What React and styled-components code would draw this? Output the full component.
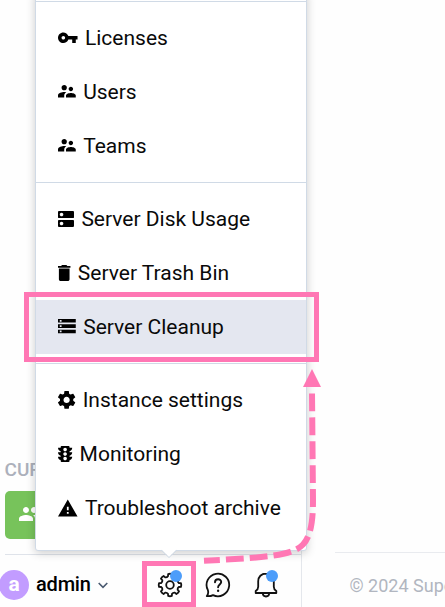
import React from 'react';
import styled, { createGlobalStyle } from 'styled-components';

const PINK = '#ff77b4';

const GlobalStyle = createGlobalStyle`
  * { box-sizing: border-box; }
  body { margin: 0; background: #fff; font-family: Roboto, sans-serif; overflow: hidden; }
`;

const Page = styled.div`
  position: relative;
  display: flex;
  width: 445px;
  height: 607px;
  overflow: hidden;
  background: #fefefe;
`;

const Sidebar = styled.aside`
  display: flex;
  flex: 0 0 302px;
  flex-direction: column;
  justify-content: flex-end;
  border-right: 1px solid #e4e7ec;
`;

const SectionLabel = styled.div`
  padding-left: 4.5px;
  font-size: 19px;
  font-weight: 500;
  line-height: 22px;
  color: #acb0bb;
`;

const TeamButton = styled.div`
  display: flex;
  align-items: center;
  width: 120px;
  height: 48px;
  margin: 10px 0 15px 5px;
  padding: 0 0 3px 13px;
  border-radius: 5px;
  background: #77c35b;
`;

const UserBar = styled.footer`
  display: flex;
  align-items: center;
  height: 53px;
  margin-left: 5px;
  border-top: 1px solid #dfe3ea;
  padding-top: 8px;
`;

const Avatar = styled.div`
  width: 30px;
  height: 30px;
  margin-left: -6px;
  border-radius: 50%;
  background: #c29cff;
  color: #fff;
  font-size: 21px;
  font-weight: 700;
  line-height: 28px;
  text-align: center;
`;

const UserName = styled.span`
  width: 54px;
  margin: 0 8px 0 7px;
  padding-bottom: 3px;
  font-size: 20px;
  font-weight: 500;
  letter-spacing: -0.2px;
  white-space: nowrap;
`;

const IconButton = styled.div`
  position: relative;
  width: 26px;
  height: 26px;
  margin: 0 0 1px ${(p) => p.$gap}px;
`;

const Dot = styled.span`
  position: absolute;
  top: -2px;
  right: 1px;
  width: 12px;
  height: 12px;
  border-radius: 50%;
  background: #4c9dfa;
`;

const Content = styled.main`
  display: flex;
  flex: 1;
  min-width: 0;
  flex-direction: column;
  justify-content: flex-end;
  padding-left: 33px;
`;

const Copyright = styled.div`
  height: 55px;
  padding: 22px 0 0 14.5px;
  border-top: 1px solid #e9ebef;
  color: #b1b6c0;
  font-size: 18px;
  line-height: 22px;
  white-space: nowrap;
`;

const Menu = styled.nav`
  position: absolute;
  left: 35px;
  top: -9px;
  width: 272px;
  height: 560px;
  padding-top: 9px;
  border: 1px solid #d0dae6;
  border-radius: 3px;
  background: #fff;
  box-shadow: 0 2px 10px rgba(0, 0, 0, 0.2);
`;

const Group = styled.div`
  padding: 9px 0;
  border-top: 1px solid #d0dae6;
`;

const Item = styled.div`
  display: flex;
  align-items: center;
  gap: 7.4px;
  height: 54px;
  padding-left: 22px;
  background: ${(p) => (p.$active ? '#e4e7f0' : 'transparent')};
  color: #0a0a0a;
  font-size: 21px;
  white-space: nowrap;

  svg {
    margin-bottom: 1px;
  }
`;

const Pointer = styled.svg`
  position: absolute;
  left: 160px;
  top: 549px;
`;

const Highlight = styled.div`
  position: absolute;
  left: ${(p) => p.$x}px;
  top: ${(p) => p.$y}px;
  width: ${(p) => p.$w}px;
  height: ${(p) => p.$h}px;
  border: 5px solid ${PINK};
`;

const Overlay = styled.svg`
  position: absolute;
  inset: 0;
`;

const GLYPHS = {
  key: {
    box: [1, 5.5, 22, 12],
    d: 'M12.65 10C11.83 7.67 9.61 6 7 6c-3.31 0-6 2.69-6 6s2.69 6 6 6c2.61 0 4.83-1.67 5.65-4H17v4h4v-4h2v-4H12.65zM7 14c-1.1 0-2-.9-2-2s.9-2 2-2 2 .9 2 2-.9 2-2 2z',
  },
  people: {
    box: [2, 5, 20, 14],
    d: 'M16.5 12c1.38 0 2.49-1.12 2.49-2.5S17.88 7 16.5 7 14 8.12 14 9.5s1.12 2.5 2.5 2.5zM9 11c1.66 0 2.99-1.34 2.99-3S10.66 5 9 5 6 6.34 6 8s1.34 3 3 3zm7.5 3c-1.83 0-5.5.92-5.5 2.75V19h11v-2.25c0-1.83-3.67-2.75-5.5-2.75zM9 13c-2.33 0-7 1.17-7 3.5V19h7v-2.25c0-.85.33-2.34 2.37-3.47C10.5 13.1 9.66 13 9 13z',
  },
  dns: {
    box: [3, 3, 18, 18],
    d: 'M20 13H4c-.55 0-1 .45-1 1v6c0 .55.45 1 1 1h16c.55 0 1-.45 1-1v-6c0-.55-.45-1-1-1zM7 19c-1.1 0-2-.9-2-2s.9-2 2-2 2 .9 2 2-.9 2-2 2zM20 3H4c-.55 0-1 .45-1 1v6c0 .55.45 1 1 1h16c.55 0 1-.45 1-1V4c0-.55-.45-1-1-1zM7 9c-1.1 0-2-.9-2-2s.9-2 2-2 2 .9 2 2-.9 2-2 2z',
  },
  trash: {
    box: [5, 3, 14, 18],
    d: 'M6 19c0 1.1.9 2 2 2h8c1.1 0 2-.9 2-2V7H6v12zM19 4h-3.5l-1-1h-5l-1 1H5v2h14V4z',
  },
  storage: {
    box: [2, 4, 20, 16],
    d: 'M2 20h20v-4H2v4zm2-3h2v2H4v-2zM2 4v4h20V4H2zm4 3H4V5h2v2zm-4 7h20v-4H2v4zm2-3h2v2H4v-2z',
  },
  settings: {
    box: [2.3, 2, 19.4, 20],
    d: 'M19.43 12.98c.04-.32.07-.64.07-.98s-.03-.66-.07-.98l2.11-1.65c.19-.15.24-.42.12-.64l-2-3.46c-.12-.22-.39-.3-.61-.22l-2.49 1c-.52-.4-1.08-.73-1.69-.98l-.38-2.65C14.46 2.18 14.25 2 14 2h-4c-.25 0-.46.18-.49.42l-.38 2.65c-.61.25-1.17.59-1.69.98l-2.49-1c-.23-.09-.49 0-.61.22l-2 3.46c-.13.22-.07.49.12.64l2.11 1.65c-.04.32-.07.65-.07.98s.03.66.07.98l-2.11 1.65c-.19.15-.24.42-.12.64l2 3.46c.12.22.39.3.61.22l2.49-1c.52.4 1.08.73 1.69.98l.38 2.65c.03.24.24.42.49.42h4c.25 0 .46-.18.49-.42l.38-2.65c.61-.25 1.17-.59 1.69-.98l2.49 1c.23.09.49 0 .61-.22l2-3.46c.12-.22.07-.49-.12-.64l-2.11-1.65zM12 15.5c-1.93 0-3.5-1.57-3.5-3.5s1.57-3.5 3.5-3.5 3.5 1.57 3.5 3.5-1.57 3.5-3.5 3.5z',
  },
  traffic: {
    box: [4, 3, 16, 18],
    d: 'M20 10h-3V8.86c1.72-.45 3-2 3-3.86h-3V4c0-.55-.45-1-1-1H8c-.55 0-1 .45-1 1v1H4c0 1.86 1.28 3.41 3 3.86V10H4c0 1.86 1.28 3.41 3 3.86V15H4c0 1.86 1.28 3.41 3 3.86V20c0 .55.45 1 1 1h8c.55 0 1-.45 1-1v-1.14c1.72-.45 3-2 3-3.86h-3v-1.14c1.72-.45 3-2 3-3.86zm-8 9c-1.11 0-2-.9-2-2s.89-2 2-2c1.1 0 2 .9 2 2s-.89 2-2 2zm0-5c-1.11 0-2-.9-2-2s.89-2 2-2c1.1 0 2 .9 2 2s-.89 2-2 2zm0-5c-1.11 0-2-.9-2-2 0-1.11.89-2 2-2 1.1 0 2 .89 2 2 0 1.1-.89 2-2 2z',
  },
  warning: {
    box: [1, 2.5, 22, 18],
    d: 'M1 21h22L12 2 1 21zm12-3h-2v-2h2v2zm0-4h-2v-4h2v4z',
  },
};

function Glyph({ name }) {
  const { box, d } = GLYPHS[name];
  const k = 21.33 / 24;
  return (
    <svg width={box[2] * k} height={box[3] * k} viewBox={box.join(' ')} overflow="visible" aria-hidden="true">
      <path d={d} fill="#000" />
    </svg>
  );
}

// Outline of an eight-toothed gear centred on (13, 13).
const GEAR = (() => {
  const at = (r, deg) => {
    const a = (deg * Math.PI) / 180;
    return `${(13 + r * Math.cos(a)).toFixed(2)} ${(13 + r * Math.sin(a)).toFixed(2)}`;
  };
  let d = '';
  for (let i = 0; i < 8; i += 1) {
    const c = i * 45;
    d += `${i ? 'L' : 'M'}${at(9, c - 13)}L${at(11.1, c - 9.5)}Q${at(11.6, c)} ${at(11.1, c + 9.5)}L${at(9, c + 13)}Q${at(8, c + 22.5)} ${at(9, c + 32)}`;
  }
  return `${d}z`;
})();

const GROUPS = [
  [
    ['key', 'Licenses'],
    ['people', 'Users'],
    ['people', 'Teams'],
  ],
  [
    ['dns', 'Server Disk Usage'],
    ['trash', 'Server Trash Bin'],
    ['storage', 'Server Cleanup', true],
  ],
  [
    ['settings', 'Instance settings'],
    ['traffic', 'Monitoring'],
    ['warning', 'Troubleshoot archive'],
  ],
];

export default function App() {
  return (
    <>
      <GlobalStyle />
      <Page>
        <Sidebar>
          <SectionLabel>CURRENT</SectionLabel>
          <TeamButton>
            <svg width="24" height="14" viewBox="1 5 22 14" fill="#fff">
              <path d="M16 11c1.66 0 2.99-1.34 2.99-3S17.66 5 16 5s-3 1.34-3 3 1.34 3 3 3zm-8 0c1.66 0 2.99-1.34 2.99-3S9.66 5 8 5 5 6.34 5 8s1.34 3 3 3zm0 2c-2.33 0-7 1.17-7 3.5V19h14v-2.5c0-2.33-4.67-3.5-7-3.5zm8 0c-.29 0-.62.02-.97.05 1.16.84 1.97 1.97 1.97 3.45V19h6v-2.5c0-2.33-4.67-3.5-7-3.5z" />
            </svg>
          </TeamButton>
          <UserBar>
            <Avatar>a</Avatar>
            <UserName>admin</UserName>
            <svg width="10" height="7" viewBox="0 0 10 7" fill="none" stroke="#4a5a70" strokeWidth="1.6">
              <path d="M.7 1 5 5.3 9.3 1" />
            </svg>
            <IconButton $gap={49}>
              <svg width="26" height="26" viewBox="0 0 26 26" fill="none" stroke="#111" strokeWidth="1.8" strokeLinejoin="round">
                <path d={GEAR} />
                <circle cx="13" cy="13" r="3.8" />
              </svg>
              <Dot />
            </IconButton>
            <IconButton $gap={22}>
              <svg width="26" height="26" viewBox="0 0 26 26" fill="none" stroke="#111" strokeWidth="1.8" strokeLinecap="round" strokeLinejoin="round">
                <path d="M2.9 18.2A11.3 11.3 0 1 1 8 23.1c-1.8 1-4 1.300-6.200 1 1.400-1.600 1.700-3.800 1.100-5.900z" />
                <path d="M10 10.200c0-4 6.200-3.900 6.200-.2 0 2.300-3.100 2.700-3.100 5.200" strokeWidth="1.9" />
                <path d="M13.100 18.700v.2" strokeWidth="2.3" />
              </svg>
            </IconButton>
            <IconButton $gap={22}>
              <svg width="26" height="26" viewBox="0 0 26 26" fill="none" stroke="#111" strokeWidth="1.8" strokeLinejoin="round">
                <path d="M13 1.500c-4.700 0-7.800 3.400-7.800 7.800v5.400c0 2-1 3.300-2.500 4.300v2h20.600v-2c-1.500-1-2.500-2.300-2.500-4.300V9.300c0-4.400-3.100-7.800-7.800-7.800z" />
                <path d="M9.800 21.300a3.200 3.200 0 0 0 6.400 0" />
              </svg>
              <Dot />
            </IconButton>
          </UserBar>
        </Sidebar>
        <Content>
          <Copyright>© 2024 Supervisely</Copyright>
        </Content>

        <Menu>
          {GROUPS.map((items, i) => (
            <Group key={i}>
              {items.map(([icon, label, active]) => (
                <Item key={label} $active={active}>
                  <Glyph name={icon} />
                  <span>{label}</span>
                </Item>
              ))}
            </Group>
          ))}
        </Menu>
        <Pointer width="18" height="10" viewBox="0 0 18 10">
          <path d="M1 0 9 8 17 0z" fill="#fff" />
          <path d="M1 1 9 8.5 17 1" fill="none" stroke="#d0dae6" />
        </Pointer>

        <Highlight $x={24} $y={292} $w={295} $h={70} />
        <Highlight $x={142} $y={561} $w={54} $h={46} />
        <Overlay width="445" height="607" viewBox="0 0 445 607">
          <path d="M312 393.5L313 500C313 524 310 537 303 544.5C294 554 275 557.5 204 560.7" fill="none" stroke={PINK} strokeWidth="6" strokeDasharray="17.8 6.1" />
          <path d="M312 369 321 387H303z" fill={PINK} />
        </Overlay>
      </Page>
    </>
  );
}
